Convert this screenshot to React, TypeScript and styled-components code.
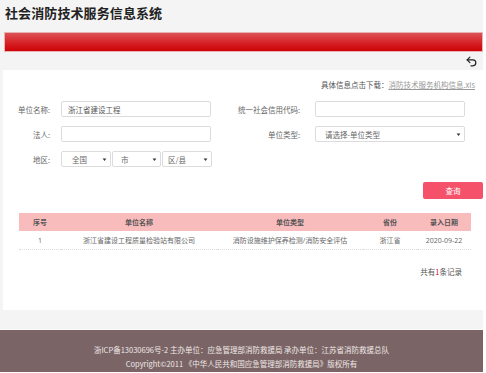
import { FC } from 'react';
import styled, { createGlobalStyle } from 'styled-components';
import { Undo2 } from 'lucide-react';

const GlobalStyle = createGlobalStyle`
  body {
    margin: 0;
    background: #fff;
    font-family: 'Noto Sans CJK SC', 'Noto Sans', sans-serif;
  }
`;

interface IRecord {
  name: string;
  type: string;
  province: string;
  date: string;
}

const records: IRecord[] = [
  {
    name: '浙江省建设工程质量检验站有限公司',
    type: '消防设施维护保养检测/消防安全评估',
    province: '浙江省',
    date: '2020-09-22',
  },
];

const columns = [
  { title: '序号', width: 42 },
  { title: '单位名称', width: 156 },
  { title: '单位类型', width: 146 },
  { title: '省份', width: 54 },
  { title: '录入日期', width: 54 },
];

const Arrow = () => (
  <SArrow viewBox='0 0 8 8'>
    <path d='M1 2.5h6L4 6.5z' fill='#333' />
  </SArrow>
);

const App: FC = () => (
  <>
    <GlobalStyle />
    <SPage>
      <STitle>社会消防技术服务信息系统</STitle>
      <SRedBar />
      <SToolbar>
        <Undo2 size={13} strokeWidth={2.2} color='#222' />
      </SToolbar>

      <SPanel>
        <SDownload>
          具体信息点击下载：<a href='#'>消防技术服务机构信息.xls</a>
        </SDownload>

        <SForm>
          <SRow>
            <SLabel $width={58}>单位名称:</SLabel>
            <SInput defaultValue='浙江省建设工程' />
            <SLabel $width={104} $gap={15}>
              统一社会信用代码:
            </SLabel>
            <SInput />
          </SRow>
          <SRow>
            <SLabel $width={58}>法人:</SLabel>
            <SInput />
            <SLabel $width={104} $gap={15}>
              单位类型:
            </SLabel>
            <SSelect $width={150} $pad={9}>
              请选择-单位类型
              <Arrow />
            </SSelect>
          </SRow>
          <SRow>
            <SLabel $width={58}>地区:</SLabel>
            <SSelectGroup>
              <SSelect $width={50} $pad={10}>
                全国
                <Arrow />
              </SSelect>
              <SSelect $width={49} $pad={8}>
                市
                <Arrow />
              </SSelect>
              <SSelect $width={50} $pad={5}>
                区/县
                <Arrow />
              </SSelect>
            </SSelectGroup>
          </SRow>
        </SForm>

        <SActions>
          <SButton>查询</SButton>
        </SActions>

        <STable>
          <thead>
            <tr>
              {columns.map((c) => (
                <th key={c.title} style={{ width: c.width }}>
                  {c.title}
                </th>
              ))}
            </tr>
          </thead>
          <tbody>
            {records.map((r, i) => (
              <tr key={r.name}>
                <td>{i + 1}</td>
                <td>{r.name}</td>
                <td>{r.type}</td>
                <td>{r.province}</td>
                <td>{r.date}</td>
              </tr>
            ))}
          </tbody>
        </STable>

        <STotal>
          共有<span>{records.length}</span>条记录
        </STotal>
      </SPanel>

      <SFooter>
        <p>
          浙ICP备13030696号-2 主办单位：应急管理部消防救援局 承办单位：江苏省消防救援总队
        </p>
        <p>Copyright©2011 《中华人民共和国应急管理部消防救援局》版权所有</p>
      </SFooter>
    </SPage>
  </>
);

export default App;

const SPage = styled.div`
  width: 483px;
  background: #f4f4f4;
`;

const STitle = styled.h1`
  margin: 0;
  height: 32px;
  padding: 4px 0 0 5px;
  box-sizing: border-box;
  font-size: 13px;
  line-height: 17px;
  font-weight: 700;
  color: #222;
  letter-spacing: 0.1px;
`;

const SRedBar = styled.div`
  height: 20px;
  margin-left: 4px;
  box-sizing: border-box;
  border: 1px solid #e9b3b3;
  background: linear-gradient(#dc5256, #d62226 55%, #cc0206);
`;

const SToolbar = styled.div`
  height: 18px;
  display: flex;
  align-items: center;
  justify-content: flex-end;
  padding-right: 5px;
`;

const SPanel = styled.div`
  margin-left: 3px;
  height: 240px;
  box-sizing: border-box;
  padding-top: 10px;
  background: #fff;
  color: #666;
  font-size: 7.5px;
`;

const SDownload = styled.div`
  height: 10px;
  line-height: 10px;
  text-align: right;
  padding-right: 8px;
  color: #555;

  & a {
    color: #999;
    text-decoration: underline;
  }
`;

const SForm = styled.div`
  margin-top: 11px;
  display: flex;
  flex-direction: column;
  gap: 9px;
`;

const SRow = styled.div`
  display: flex;
  align-items: center;
  height: 16px;
`;

const SLabel = styled.label<{ $width: number; $gap?: number }>`
  width: ${({ $width }) => $width}px;
  padding-right: ${({ $gap }) => $gap ?? 11}px;
  box-sizing: border-box;
  text-align: right;
  color: #666;
  white-space: nowrap;
`;

const SInput = styled.input`
  width: 150px;
  height: 16px;
  box-sizing: border-box;
  border: 1px solid #dcdcdc;
  border-radius: 2px;
  padding: 0 6px;
  font-family: inherit;
  font-size: 7.5px;
  color: #555;
  outline: none;
`;

const SSelectGroup = styled.div`
  display: flex;
  gap: 1px;
`;

const SSelect = styled.div<{ $width: number; $pad: number }>`
  width: ${({ $width }) => $width}px;
  height: 16px;
  box-sizing: border-box;
  border: 1px solid #dcdcdc;
  border-radius: 2px;
  padding: 0 3px 0 ${({ $pad }) => $pad}px;
  display: flex;
  align-items: center;
  justify-content: space-between;
  color: #666;
`;

const SArrow = styled.svg`
  width: 5px;
  height: 5px;
`;

const SActions = styled.div`
  margin-top: 15px;
  display: flex;
  justify-content: flex-end;
`;

const SButton = styled.button`
  width: 60px;
  height: 17px;
  border: none;
  border-radius: 2px;
  background: #f6516b;
  color: #fff;
  font-family: inherit;
  font-size: 7.5px;
  padding: 0;
`;

const STable = styled.table`
  margin: 14px 0 0 16px;
  width: 452px;
  border-collapse: collapse;
  table-layout: fixed;
  font-family: 'Open Sans', 'Noto Sans CJK SC', sans-serif;
  font-size: 7px;

  & th {
    height: 18px;
    padding: 0;
    background: #f9bcbd;
    color: #555;
    font-weight: 700;
  }

  & td {
    height: 18px;
    padding: 0;
    text-align: center;
    color: #666;
    border-bottom: 1px dotted #ddd;
    white-space: nowrap;
  }
`;

const STotal = styled.div`
  margin-top: 17px;
  text-align: right;
  padding-right: 21px;
  line-height: 10px;
  color: #555;

  & span {
    color: #e4002b;
  }
`;

const SFooter = styled.footer`
  margin-top: 19px;
  border-top: 1px solid #fbfbfb;
  height: 43px;
  box-sizing: border-box;
  padding-top: 13px;
  background: #7a6465;
  color: #f0e8e8;
  font-size: 7.5px;
  text-align: center;

  & p {
    margin: 0;
    line-height: 14px;
  }
`;
